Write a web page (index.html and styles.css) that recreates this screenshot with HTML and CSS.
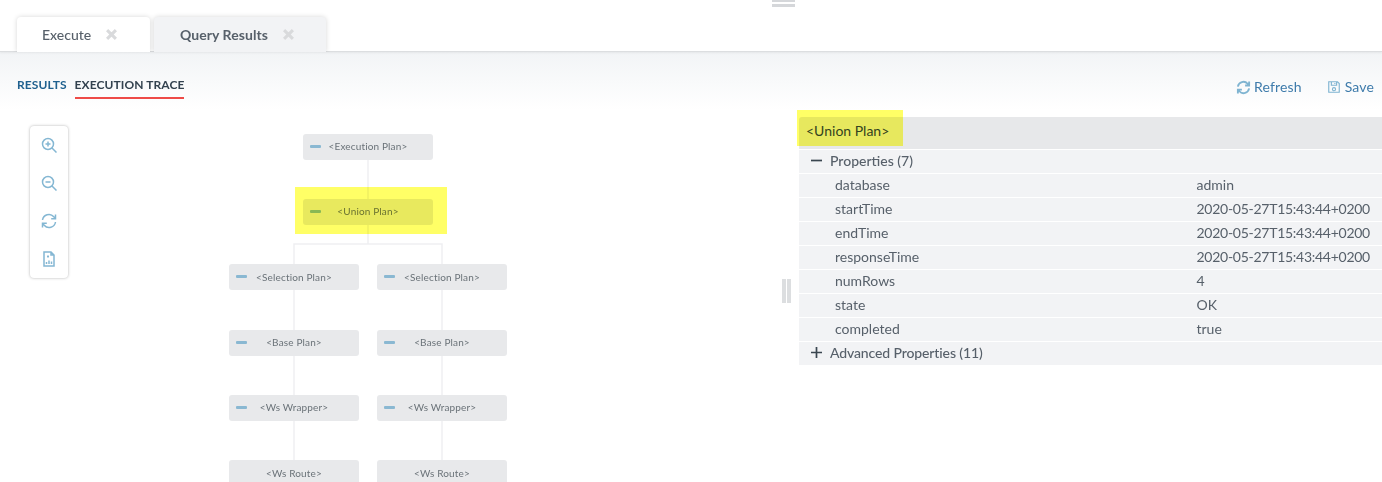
FILE: index.html
```html
<!DOCTYPE html>
<html lang="en">
<head>
<meta charset="utf-8">
<title>Query Results</title>
<link rel="stylesheet" href="styles.css">
</head>
<body>
<div class="handle"><span></span><span></span></div>
<nav class="tabs">
  <div class="tab tab-execute"><span>Execute</span><svg class="close" viewBox="0 0 10 10"><path d="M1 1l8 8M9 1l-8 8"/></svg></div>
  <div class="tab tab-query"><span>Query Results</span><svg class="close" viewBox="0 0 10 10"><path d="M1 1l8 8M9 1l-8 8"/></svg></div>
</nav>
<header class="toolbar">
  <div class="subtabs">
    <span class="subtab">RESULTS</span>
    <span class="subtab active">EXECUTION TRACE</span>
  </div>
  <div class="actions">
    <span class="action"><svg class="ico" viewBox="0 0 16 16"><path d="M2 7a6 6 0 0 1 10.400-3L14 5.600M14 1.500v4.300H9.700M14 9a6 6 0 0 1-10.400 3L2 10.400M2 14.500v-4.300h4.300"/></svg>Refresh</span>
    <span class="action"><svg class="ico" viewBox="0 0 16 16"><path d="M2 2h10l2 2v10H2zM5 2v4h6V2M9 3.500v1"/><circle cx="8" cy="10.500" r="1.800"/></svg>Save</span>
  </div>
</header>
<main class="content">
  <section class="graph">
    <div class="zoombar">
      <svg class="zi" viewBox="0 0 16 16"><circle cx="7" cy="7" r="5.500"/><path d="M11 11l4.500 4.500M4.500 7h5M7 4.500v5"/></svg>
      <svg class="zi" viewBox="0 0 16 16"><circle cx="7" cy="7" r="5.500"/><path d="M11 11l4.500 4.500M4.500 7h5"/></svg>
      <svg class="zi" viewBox="0 0 16 16"><path d="M1.500 7a6.500 6.500 0 0 1 11.300-3.300L14.500 5.500M14.500 1.500v4.300h-4.300M14.500 9a6.500 6.500 0 0 1-11.300 3.300L1.500 10.500M1.500 14.500v-4.300h4.300"/></svg>
      <svg class="zi" viewBox="0 0 16 16"><path d="M3 1h7l3 3v11H3zM10 1v3h3M5.500 13v-2M8 13v-3.500M10.500 13v-2.500M6 5.500h2M7 4.500v2"/></svg>
    </div>
    <svg class="links" viewBox="0 0 1382 482" aria-hidden="true">
      <path d="M368 160V244M294 290V460M442 290V460M294 264V244H442V264"/>
    </svg>
    <div class="node n-exec"><i></i><span>&lt;Execution Plan&gt;</span></div>
    <div class="node n-union"><i></i><span>&lt;Union Plan&gt;</span></div>
    <div class="node n-sel1"><i></i><span>&lt;Selection Plan&gt;</span></div>
    <div class="node n-sel2"><i></i><span>&lt;Selection Plan&gt;</span></div>
    <div class="node n-base1"><i></i><span>&lt;Base Plan&gt;</span></div>
    <div class="node n-base2"><i></i><span>&lt;Base Plan&gt;</span></div>
    <div class="node n-wrap1"><i></i><span>&lt;Ws Wrapper&gt;</span></div>
    <div class="node n-wrap2"><i></i><span>&lt;Ws Wrapper&gt;</span></div>
    <div class="node n-route1"><span>&lt;Ws Route&gt;</span></div>
    <div class="node n-route2"><span>&lt;Ws Route&gt;</span></div>
    <div class="mark mark-graph"></div>
  </section>
  <div class="splitter"><span></span><span></span></div>
  <section class="details">
    <h2 class="details-title">&lt;Union Plan&gt;</h2>
    <div class="group"><svg class="sign" viewBox="0 0 11 11"><path d="M0 5.500h11"/></svg>Properties (7)</div>
    <div class="prop"><span>database</span><span>admin</span></div>
    <div class="prop"><span>startTime</span><span class="stamp">2020-05-27T15:43:44+0200</span></div>
    <div class="prop"><span>endTime</span><span class="stamp">2020-05-27T15:43:44+0200</span></div>
    <div class="prop"><span>responseTime</span><span class="stamp">2020-05-27T15:43:44+0200</span></div>
    <div class="prop"><span>numRows</span><span>4</span></div>
    <div class="prop"><span>state</span><span>OK</span></div>
    <div class="prop"><span>completed</span><span>true</span></div>
    <div class="group group-adv"><svg class="sign" viewBox="0 0 11 11"><path d="M0 5.500h11M5.500 0v11"/></svg>Advanced Properties (11)</div>
    <div class="mark mark-title"></div>
  </section>
</main>
</body>
</html>
```

FILE: styles.css
```css
* { box-sizing: border-box; }
html, body { margin: 0; height: 100%; overflow: hidden; }
body {
  position: relative;
  width: 1382px;
  height: 482px;
  background: #fff;
  font-family: Lato, "Open Sans", sans-serif;
  color: #57606a;
}

.handle {
  position: absolute;
  left: 772px;
  top: 0;
  width: 23px;
}
.handle span {
  display: block;
  height: 3px;
  margin-bottom: 2px;
  background: #d5d7da;
}
.handle span:first-child { height: 2px; }

.tabs {
  display: flex;
  gap: 4px;
  height: 52px;
  padding: 17px 0 0 17px;
  border-bottom: 1px solid #dcdee0;
  box-shadow: 0 1px 2px rgba(0, 0, 0, .06);
  position: relative;
}
.tab {
  display: flex;
  align-items: center;
  height: 35px;
  padding-bottom: 1px;
  border-radius: 4px 4px 0 0;
  font-size: 14px;
  box-shadow: 0 0 5px rgba(0, 0, 0, .16);
  clip-path: inset(-6px -6px 0 -6px);
}
.tab-execute { width: 133px; padding-left: 25px; background: #fff; font-weight: 500; }
.tab-query { width: 172px; padding-left: 26px; background: #f2f3f5; font-weight: 700; }
.tab-query span { letter-spacing: .06px; }
.close {
  width: 11px;
  height: 11px;
  margin-left: 15px;
  fill: none;
  stroke: #d9dadc;
  stroke-width: 2.800;
}

.toolbar {
  display: flex;
  justify-content: space-between;
  align-items: flex-start;
  height: 58px;
  padding: 24px 8px 0 17px;
  background: linear-gradient(#f2f4f6, #fff);
}
.subtabs { display: flex; gap: 8px; }
.subtab {
  height: 23px;
  font-size: 12px;
  font-weight: 700;
  line-height: 18px;
  letter-spacing: .08px;
  color: #20618f;
}
.subtab.active {
  color: #33424f;
  border-bottom: 2px solid #ee4b47;
}
.actions { display: flex; gap: 25px; padding-top: 2px; }
.action {
  display: flex;
  align-items: center;
  gap: 3px;
  font-size: 14px;
  line-height: 18px;
  letter-spacing: .14px;
  color: #3e7bab;
}
.ico {
  width: 15px;
  height: 15px;
  fill: none;
  stroke: #7fb4d1;
  stroke-width: 2;
}
.action:last-child { gap: 4px; }
.action:last-child .ico { width: 14px; height: 14px; stroke-width: 1.300; }

.content { display: flex; }
.graph {
  position: relative;
  width: 781px;
  height: 372px;
}
.links {
  position: absolute;
  left: 0;
  top: -110px;
  width: 1382px;
  height: 482px;
  fill: none;
  stroke: #eff0f2;
  stroke-width: 1.500;
}
.zoombar {
  position: absolute;
  left: 30px;
  top: 16px;
  width: 38px;
  height: 152px;
  display: flex;
  flex-direction: column;
  align-items: center;
  gap: 22px;
  padding-top: 11px;
  background: #fff;
  border-radius: 4px;
  box-shadow: 0 0 3px rgba(0, 0, 0, .3);
}
.zi {
  width: 16px;
  height: 16px;
  flex: none;
  fill: none;
  stroke: #84b7d3;
  stroke-width: 1.500;
}

.node {
  position: absolute;
  width: 130px;
  height: 26px;
  display: flex;
  align-items: center;
  justify-content: center;
  padding-bottom: 2px;
  background: #e8e9eb;
  border-radius: 3px;
  font-size: 10px;
  color: #6a7278;
  letter-spacing: .15px;
}
.node i {
  position: absolute;
  left: 7px;
  top: 11px;
  width: 11px;
  height: 3px;
  border-radius: 1px;
  background: #8ab8d2;
}
.n-exec { left: 303px; top: 24px; }
.n-union { left: 303px; top: 89px; }
.n-sel1 { left: 229px; top: 154px; padding-bottom: 0; }
.n-sel2 { left: 377px; top: 154px; padding-bottom: 0; }
.n-base1 { left: 229px; top: 220px; }
.n-base2 { left: 377px; top: 220px; }
.n-wrap1 { left: 229px; top: 285px; }
.n-wrap2 { left: 377px; top: 285px; }
.n-route1 { left: 229px; top: 350px; padding-bottom: 0; }
.n-route2 { left: 377px; top: 350px; padding-bottom: 0; }

.mark {
  position: absolute;
  background: #ffff66;
  mix-blend-mode: multiply;
}
.mark-graph { left: 295px; top: 77px; width: 152px; height: 47px; }
.mark-title { left: -2px; top: 0; width: 106px; height: 36px; }

.splitter {
  display: flex;
  gap: 1px;
  width: 18px;
  padding-top: 169px;
  padding-left: 1px;
  height: 0;
}
.splitter span {
  display: block;
  flex: none;
  width: 4px;
  height: 24px;
  background: #dcdee0;
}

.details {
  position: relative;
  width: 583px;
  font-size: 14px;
  line-height: 22px;
  padding-top: 7px;
}
.details-title {
  margin: 0 0 1px;
  height: 32px;
  padding-left: 7px;
  background: #e7e8ea;
  font-size: 14px;
  font-weight: 400;
  line-height: 28px;
  color: #33424f;
  border-radius: 3px 0 0 0;
}
.group, .prop {
  height: 23px;
  margin-bottom: 1px;
  background: #f2f3f5;
}
.group {
  display: flex;
  align-items: flex-start;
  padding-left: 12px;
  font-weight: 500;
}
.group-adv { letter-spacing: -.12px; }
.sign {
  width: 11px;
  height: 11px;
  margin: 5px 8px 0 0;
  flex: none;
  fill: none;
  stroke: #3a4650;
  stroke-width: 1.700;
}
.prop {
  display: grid;
  grid-template-columns: 361.500px 1fr;
  padding-left: 36px;
}
.stamp { letter-spacing: -.27px; }
```
